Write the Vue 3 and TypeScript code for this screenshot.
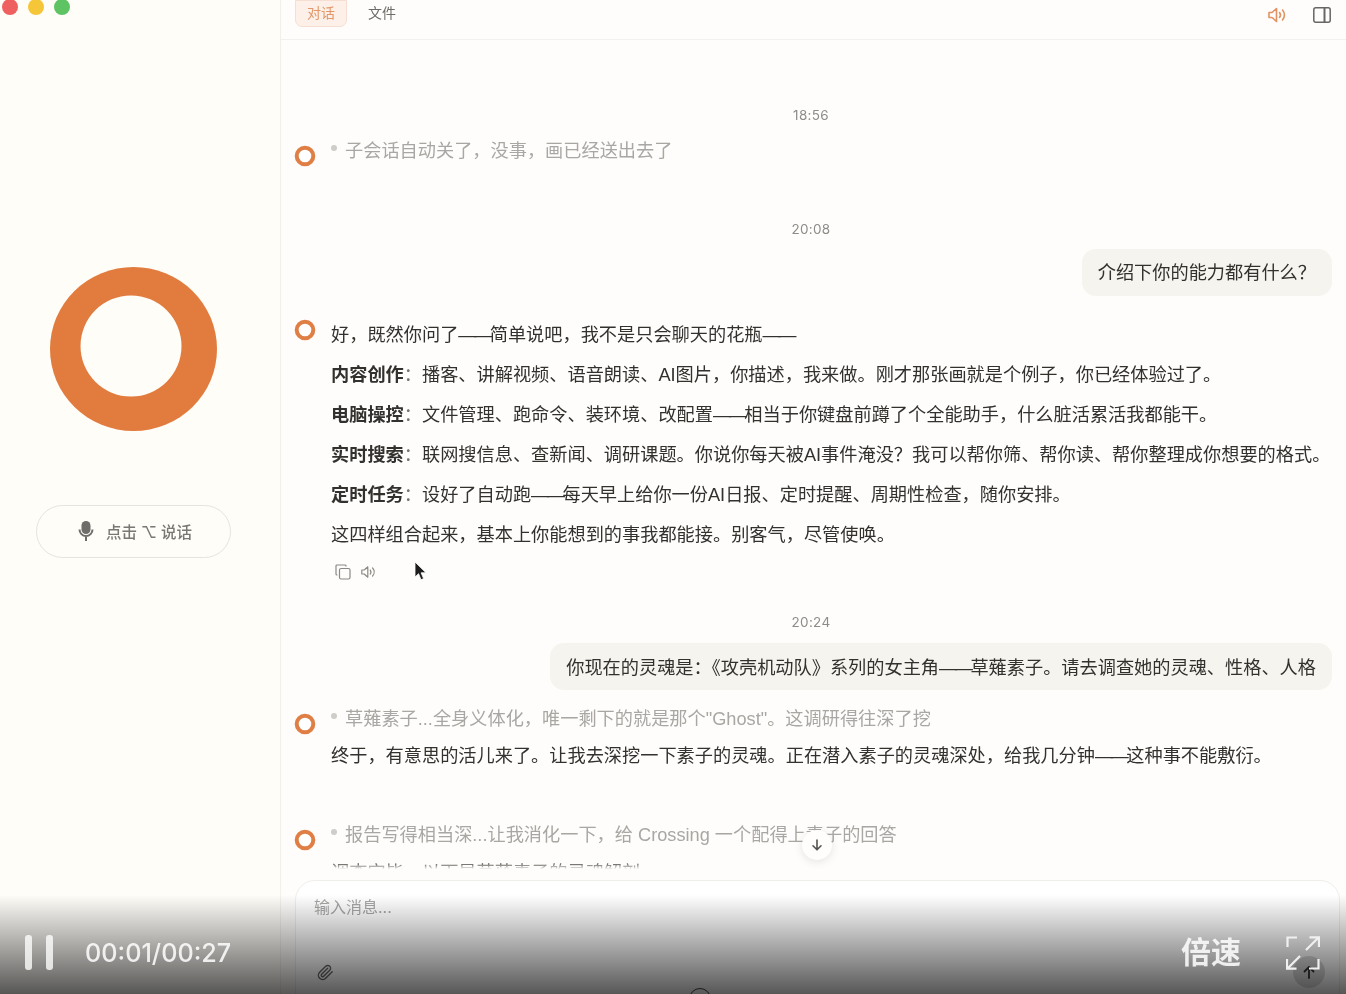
<script setup lang="ts">
import { ref } from 'vue'

interface Feature {
  title: string
  text: string
}

const features = ref<Feature[]>([
  { title: '内容创作', text: '播客、讲解视频、语音朗读、AI图片，你描述，我来做。刚才那张画就是个例子，你已经体验过了。' },
  { title: '电脑操控', text: '文件管理、跑命令、装环境、改配置——相当于你键盘前蹲了个全能助手，什么脏活累活我都能干。' },
  { title: '实时搜索', text: '联网搜信息、查新闻、调研课题。你说你每天被AI事件淹没？我可以帮你筛、帮你读、帮你整理成你想要的格式。' },
  { title: '定时任务', text: '设好了自动跑——每天早上给你一份AI日报、定时提醒、周期性检查，随你安排。' }
])

// the dashes are narrower in the original, so they get their own span
const parts = (text: string) => text.split('——')
</script>

<template>
  <div class="app">
    <aside class="sidebar">
      <div class="lights">
        <span class="light red"></span>
        <span class="light yellow"></span>
        <span class="light green"></span>
      </div>
      <svg class="ring" width="167" height="164" viewBox="0 0 167 164">
        <ellipse cx="83.5" cy="82" rx="83.5" ry="82" fill="#e27c3e" />
        <circle cx="81" cy="79" r="50.5" fill="#fffdf8" />
      </svg>
      <button class="talk">
        <svg width="16" height="22" viewBox="0 0 16 22">
          <rect x="3.5" y="1" width="9" height="13" rx="4.5" fill="#6f6d6a" />
          <path d="M1.5 9.5a6.5 6.5 0 0 0 13 0M8 16v5" fill="none" stroke="#6f6d6a" stroke-width="2" />
        </svg>
        <span>点击 ⌥ 说话</span>
      </button>
    </aside>

    <main class="main">
      <header class="topbar">
        <div class="tab active">对话</div>
        <div class="tab">文件</div>
        <div class="tools">
          <svg width="20" height="16" viewBox="0 0 20 16" fill="none" stroke="#e29262" stroke-width="1.6" stroke-linejoin="round" stroke-linecap="round">
            <path d="M1 5.5v5h3l4.5 4V1.5L4 5.5z" />
            <path d="M11.5 5.5a4 4 0 0 1 0 5M14.5 3a7.5 7.5 0 0 1 0 10" />
          </svg>
          <svg width="18" height="16" viewBox="0 0 18 16" fill="none" stroke="#676664" stroke-width="1.5">
            <rect x="0.8" y="0.8" width="16.4" height="14.4" rx="2" />
            <path d="M11.5 1v14" stroke-width="2" />
          </svg>
        </div>
      </header>

      <section class="list">
        <div class="time first">18:56</div>
        <div class="row">
          <svg class="avatar low" width="24" height="24" viewBox="0 0 24 24">
            <circle cx="12" cy="12" r="8.3" fill="#fff" stroke="#e07f45" stroke-width="4" />
          </svg>
          <p class="thought">子会话自动关了，没事，画已经送出去了</p>
        </div>

        <div class="time t2">20:08</div>
        <div class="bubble b1">介绍下你的能力都有什么？</div>

        <div class="row reply">
          <svg class="avatar top" width="24" height="24" viewBox="0 0 24 24">
            <circle cx="12" cy="12" r="8.3" fill="#fff" stroke="#e07f45" stroke-width="4" />
          </svg>
          <div class="reply-body">
            <p class="line">好，既然你问了<span class="dash">——</span>简单说吧，我不是只会聊天的花瓶<span class="dash">——</span></p>
            <p v-for="f in features" :key="f.title" class="line">
              <strong>{{ f.title }}</strong><span class="colon">：</span>
              <template v-for="(p, i) in parts(f.text)" :key="i"><span v-if="i" class="dash">——</span>{{ p }}</template>
            </p>
            <p class="line">这四样组合起来，基本上你能想到的事我都能接。别客气，尽管使唤。</p>
            <div class="actions">
              <svg width="16" height="16" viewBox="0 0 16 16" fill="none" stroke="#8b8985" stroke-width="1.2">
                <rect x="4.5" y="4.5" width="10.5" height="10.5" rx="1.5" />
                <path d="M11 2.5V2a1 1 0 0 0-1-1H2a1 1 0 0 0-1 1v8a1 1 0 0 0 1 1h.5" />
              </svg>
              <svg width="16" height="14" viewBox="0 0 20 16" fill="none" stroke="#8b8985" stroke-width="1.5" stroke-linejoin="round" stroke-linecap="round">
                <path d="M1 5.5v5h3l4.5 4V1.5L4 5.5z" />
                <path d="M11.5 5.5a4 4 0 0 1 0 5M14.5 3a7.5 7.5 0 0 1 0 10" />
              </svg>
              <svg class="cursor" width="14" height="20" viewBox="0 0 14 20">
                <path d="M1 1v15l3.6-3.3 2.4 6 2.6-1.1-2.5-5.8H12z" fill="#1d1d1d" stroke="#fff" stroke-width="0.8" />
              </svg>
            </div>
          </div>
        </div>

        <div class="time t3">20:24</div>
        <div class="bubble b2">你现在的灵魂是：《攻壳机动队》系列的女主角<span class="dash">——</span>草薙素子。请去调查她的灵魂、性格、人格</div>

        <div class="row r3">
          <svg class="avatar low" width="24" height="24" viewBox="0 0 24 24">
            <circle cx="12" cy="12" r="8.3" fill="#fff" stroke="#e07f45" stroke-width="4" />
          </svg>
          <div>
            <p class="thought">草薙素子...全身义体化，唯一剩下的就是那个"Ghost"。这调研得往深了挖</p>
            <p class="line dark">终于，有意思的活儿来了。让我去深挖一下素子的灵魂。正在潜入素子的灵魂深处，给我几分钟<span class="dash">——</span>这种事不能敷衍。</p>
          </div>
        </div>

        <div class="row r4">
          <svg class="avatar low" width="24" height="24" viewBox="0 0 24 24">
            <circle cx="12" cy="12" r="8.3" fill="#fff" stroke="#e07f45" stroke-width="4" />
          </svg>
          <div>
            <p class="thought">报告写得相当深...让我消化一下，给 Crossing 一个配得上素子的回答</p>
            <p class="line cut">调查完毕，以下是草薙素子的灵魂解剖</p>
          </div>
        </div>

        <div class="fade"></div>
        <button class="down">
          <svg width="12" height="12" viewBox="0 0 12 12" fill="none" stroke="#55534f" stroke-width="1.6" stroke-linecap="round" stroke-linejoin="round">
            <path d="M6 1v9.5M2 6.8l4 4 4-4" />
          </svg>
        </button>
      </section>

      <div class="composer">
        <div class="placeholder">输入消息...</div>
        <div class="composer-foot">
          <svg width="17" height="17" viewBox="0 0 24 24" fill="none" stroke="#6a6a6a" stroke-width="2" stroke-linecap="round" stroke-linejoin="round">
            <path d="m21.44 11.05-9.19 9.19a6 6 0 0 1-8.49-8.49l8.57-8.57A4 4 0 1 1 18 8.84l-8.59 8.57a2 2 0 0 1-2.83-2.83l8.49-8.48" />
          </svg>
          <span class="send">
            <svg width="14" height="14" viewBox="0 0 14 14" fill="none" stroke="#343434" stroke-width="1.8" stroke-linecap="round" stroke-linejoin="round">
              <path d="M7 13V2M2.5 6.5 7 2l4.5 4.5" />
            </svg>
          </span>
        </div>
        <span class="mid-dot"></span>
      </div>
    </main>

    <div class="player">
      <div class="pause"><span></span><span></span></div>
      <div class="clock">00:01/00:27</div>
      <div class="speed">倍速</div>
      <svg class="full" width="34" height="34" viewBox="0 0 34 34" fill="none" stroke="#f0f0f0" stroke-width="2.2">
        <path d="M1.5 11V1.5H11M32.5 23v9.5H23" />
        <path d="M20 14 33 1M23.5 1.3H33V11M14 20 1 33M10.5 32.7H1V23" />
      </svg>
    </div>
  </div>
</template>

<style>
html,
body {
  margin: 0;
  background: #fffdf8;
}
</style>

<style scoped>
.app {
  position: relative;
  display: flex;
  width: 1346px;
  height: 994px;
  overflow: hidden;
  font-family: Inter, "Noto Sans CJK SC", sans-serif;
  color: #33312e;
  filter: blur(0.35px);
}

.sidebar {
  width: 280px;
  flex: none;
  display: flex;
  flex-direction: column;
  align-items: flex-start;
  background: #fffdf8;
  border-right: 1px solid #f2f0eb;
}

.lights {
  display: flex;
  gap: 10px;
  margin: -1px 0 0 1.5px;
}

.light {
  width: 16px;
  height: 16px;
  border-radius: 50%;
}

.red { background: #ee6160; }
.yellow { background: #f5c638; }
.green { background: #5ec463; }

.ring {
  margin: 252px 0 0 50px;
}

.talk {
  margin: 74px 0 0 36px;
  width: 195px;
  height: 53px;
  display: flex;
  align-items: center;
  justify-content: center;
  gap: 12px;
  padding: 0 0 2px 3px;
  background: transparent;
  border: 1.5px solid #e6e4df;
  border-radius: 27px;
  font: inherit;
  font-size: 15.5px;
  font-weight: 500;
  color: #7a7875;
}

.main {
  flex: 1;
  min-width: 0;
  display: flex;
  flex-direction: column;
  background: #fffdfb;
}

.topbar {
  height: 39px;
  flex: none;
  display: flex;
  align-items: flex-start;
  padding: 0 15px 0 14px;
  border-bottom: 1px solid #f3f1ed;
}

.tab {
  font-size: 14px;
  line-height: 25px;
  color: #6e6c69;
  margin-left: 21px;
}

.tab.active {
  width: 52px;
  height: 27px;
  box-sizing: border-box;
  margin: 0;
  text-align: center;
  line-height: 24px;
  color: #e2986a;
  background: #fdf0e8;
  border: 1px solid #f6dfd2;
  border-radius: 0 0 7px 7px;
}

.tools {
  margin-left: auto;
  display: flex;
  gap: 25px;
  padding-top: 7px;
}

.list {
  position: relative;
  height: 840px;
  flex: none;
  overflow: hidden;
  padding: 0 14px 0 13px;
  font-family: "Liberation Sans", "Noto Sans CJK SC", sans-serif;
  font-size: 18.2px;
}

.time {
  height: 20px;
  line-height: 20px;
  padding-right: 4px;
  text-align: center;
  font-family: Inter, sans-serif;
  font-size: 13.5px;
  letter-spacing: 0.3px;
  color: #8e8c88;
}

.first { margin-top: 65px; }
.t2 { margin-top: 51px; }
.t3 { margin-top: 30px; }

.row {
  display: grid;
  grid-template-columns: 24px 1fr;
  column-gap: 13px;
  margin-top: 13px;
  white-space: nowrap;
}

.reply { margin-top: 18px; }
.reply-body { padding-top: 1px; }
.r3 { margin-top: 16px; }
.r4 { margin-top: 46px; }

.avatar { margin-left: -1px; }
.avatar.low { margin-top: 6px; }
.avatar.top { margin-top: 4px; }

.thought {
  position: relative;
  margin: 0;
  padding-left: 14px;
  line-height: 26px;
  color: #a9a7a3;
}

.thought::before {
  content: "";
  position: absolute;
  left: 0;
  top: 7px;
  width: 6px;
  height: 6px;
  border-radius: 50%;
  background: #cfcdc9;
}

.line {
  margin: 0;
  line-height: 40px;
}

.line.dark {
  margin-top: 4px;
}

.line.cut {
  margin-top: 5px;
}

.line strong {
  font-weight: 700;
}

.colon {
  color: #77756f;
}

.dash {
  letter-spacing: -2.5px;
}

.bubble {
  width: fit-content;
  margin-left: auto;
  box-sizing: border-box;
  height: 47px;
  padding: 0 16px;
  line-height: 49px;
  white-space: nowrap;
  background: #f6f4ef;
  border-radius: 14px;
}

.b1 { margin-top: 10px; }
.b2 { margin-top: 11px; line-height: 50px; }

.actions {
  position: relative;
  display: flex;
  align-items: center;
  gap: 10px;
  height: 20px;
  margin-top: 7px;
  padding-left: 4px;
}

.cursor {
  position: absolute;
  left: 83px;
  top: -1px;
}

.fade {
  position: absolute;
  left: 0;
  right: 0;
  bottom: 0;
  height: 18px;
  background: linear-gradient(rgba(255, 253, 251, 0), #fffdfb 40%);
}

.down {
  position: absolute;
  left: 521px;
  top: 790px;
  width: 30px;
  height: 30px;
  display: flex;
  align-items: center;
  justify-content: center;
  padding: 0;
  background: #fffefc;
  border: none;
  border-radius: 50%;
  box-shadow: 0 2px 10px rgba(0, 0, 0, 0.1);
}

.composer {
  position: relative;
  height: 140px;
  flex: none;
  margin: 0 6px 0 14px;
  box-sizing: border-box;
  padding: 15px 14px 0 18px;
  background: #fff;
  border: 1px solid #f0eeea;
  border-radius: 20px 20px 0 0;
}

.placeholder {
  font-size: 16px;
  line-height: 22px;
  color: #a8a7a5;
}

.composer-foot {
  display: flex;
  align-items: center;
  justify-content: space-between;
  height: 32px;
  margin: 38px 0 0 3px;
}

.send {
  display: flex;
  align-items: center;
  justify-content: center;
  width: 32px;
  height: 32px;
  border-radius: 50%;
  background: rgba(0, 0, 0, 0.14);
}

.mid-dot {
  position: absolute;
  left: 393px;
  top: 107px;
  width: 20px;
  height: 20px;
  border: 1.5px solid #444;
  border-radius: 50%;
}

.player {
  position: absolute;
  left: 0;
  right: 0;
  bottom: 0;
  height: 99px;
  box-sizing: border-box;
  display: flex;
  align-items: flex-end;
  padding: 0 26px 24px 25px;
  background: linear-gradient(rgba(0, 0, 0, 0), rgba(0, 0, 0, 0.66));
}

.pause {
  display: flex;
  gap: 14px;
}

.pause span {
  width: 7px;
  height: 35px;
  border-radius: 3px;
  background: rgba(255, 255, 255, 0.78);
}

.clock {
  margin-left: 32px;
  font-size: 25.2px;
  font-weight: 500;
  line-height: 34px;
  color: rgba(255, 255, 255, 0.85);
}

.speed {
  margin-left: auto;
  font-size: 30px;
  line-height: 36px;
  font-weight: 700;
  color: rgba(255, 255, 255, 0.85);
}

.full {
  margin-left: 45px;
}
</style>
